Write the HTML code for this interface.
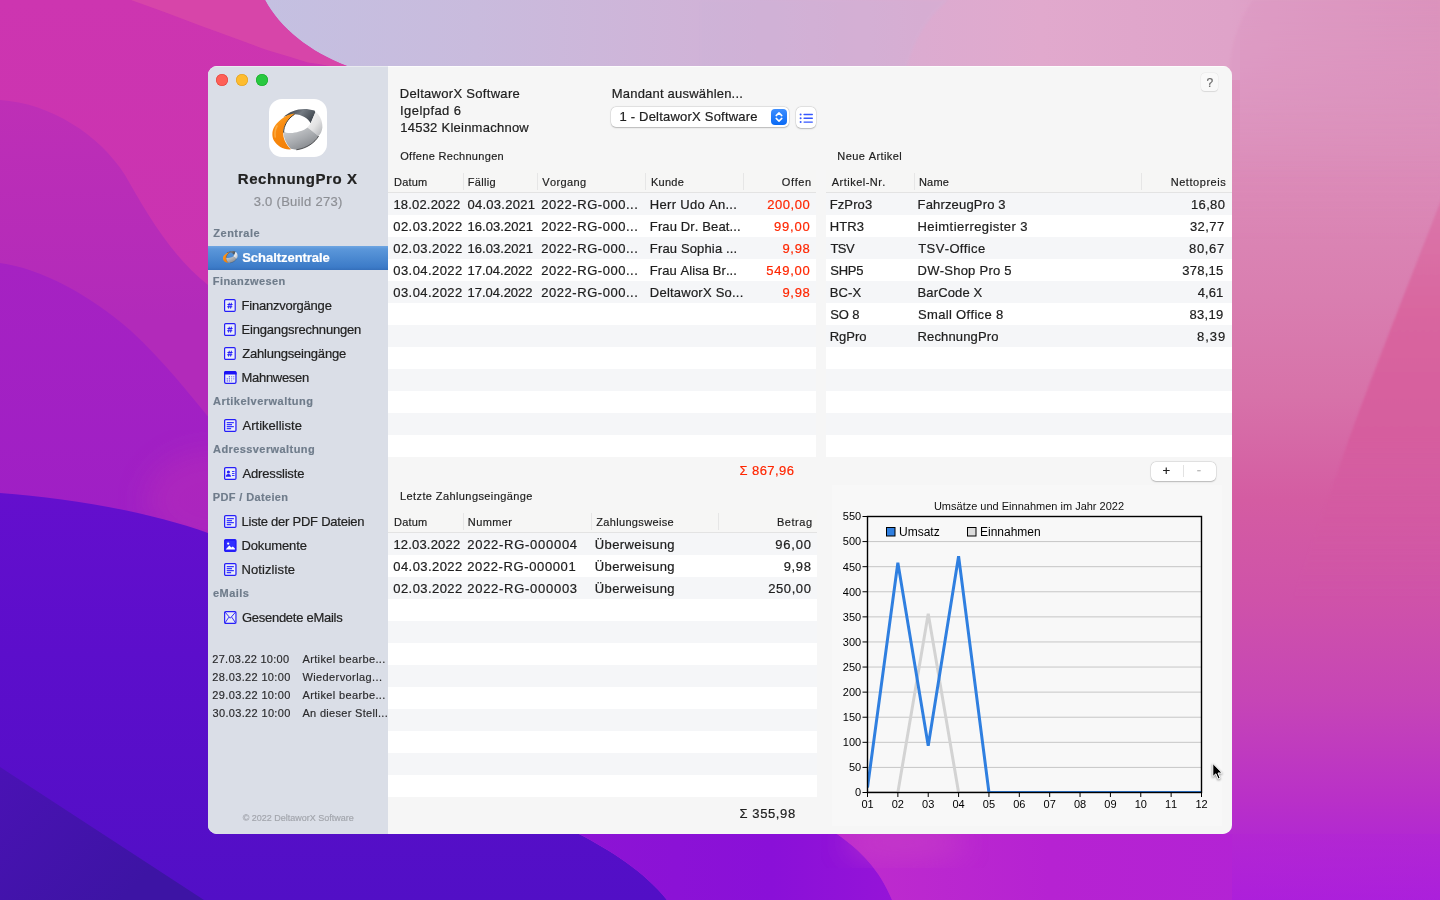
<!DOCTYPE html>
<html lang="de"><head><meta charset="utf-8"><title>RechnungPro X</title>
<style>
html,body{margin:0;padding:0}
body{width:1440px;height:900px;overflow:hidden;position:relative;background:#c03ab8;
 font-family:"Liberation Sans",sans-serif;font-kerning:none;-webkit-font-smoothing:antialiased}
#bg{position:absolute;left:0;top:0}
#win{will-change:transform;position:absolute;left:208px;top:66px;width:1024px;height:768px;border-radius:9px;overflow:hidden;background:#f6f6f6}
#sidebar{position:absolute;left:0;top:0;width:180px;height:768px;background:#dadee7}
#main{position:absolute;left:0;top:0;width:1024px;height:768px;pointer-events:none}
#main:before{content:"";position:absolute;left:0;top:0;right:0;height:1px;background:linear-gradient(90deg,rgba(255,255,255,.4) 0,rgba(255,255,255,.4) 180px,rgba(255,255,255,.8) 180px)}
.t{position:absolute;white-space:nowrap;line-height:20px;color:#202020;-webkit-text-stroke:.2px}
.tl{position:absolute;top:8px;width:12px;height:12px;border-radius:50%}
.ic{position:absolute;overflow:visible}
#sel{position:absolute;left:0;top:180px;width:180px;height:24px;
 background:linear-gradient(#6fa6e2 0,#5b97da 12%,#3c7bc8 88%,#356fbb 100%)}
.btn{position:absolute;background:#fff;border-radius:5px;box-shadow:0 0 0 .5px rgba(0,0,0,.10),0 .5px 1.5px rgba(0,0,0,.22)}
.help{position:absolute;width:17px;height:18px;border-radius:4px;background:#f9f9f9;box-shadow:0 0 0 .5px rgba(0,0,0,.05),0 .5px 1px rgba(0,0,0,.10)}
.tbl{position:absolute;overflow:hidden;
 background:repeating-linear-gradient(#f5f6f8 0,#f5f6f8 22px,#fff 22px,#fff 44px) 0 23px/100% 100% no-repeat #fff}
.th{position:absolute;left:0;top:0;right:0;background:#f6f6f5;border-bottom:1px solid #e3e3e3}
.sep{position:absolute;top:3px;width:1px;height:17px;background:#e6e6e6}
</style></head>
<body>
<svg id="bg" width="1440" height="900" viewBox="0 0 1440 900">
<defs>
 <linearGradient id="gR" x1="0" y1="0" x2="0" y2="900" gradientUnits="userSpaceOnUse">
  <stop offset="0" stop-color="#df9dc6"/><stop offset=".11" stop-color="#dd92bd"/><stop offset=".22" stop-color="#db88b6"/>
  <stop offset=".33" stop-color="#d97eb0"/><stop offset=".44" stop-color="#d772a9"/><stop offset=".555" stop-color="#d45ca2"/>
  <stop offset=".667" stop-color="#cf52a9"/><stop offset=".778" stop-color="#c645b6"/><stop offset=".889" stop-color="#b930c8"/>
  <stop offset=".945" stop-color="#b026d4"/><stop offset="1" stop-color="#a81ce0"/>
 </linearGradient>
 <linearGradient id="gR3" x1="0" y1="0" x2="0" y2="240" gradientUnits="userSpaceOnUse">
  <stop offset="0" stop-color="#da8fbc" stop-opacity=".25"/><stop offset=".4" stop-color="#da8fbc" stop-opacity=".25"/><stop offset="1" stop-color="#da8fbc" stop-opacity="0"/>
 </linearGradient>
 <linearGradient id="gR2" x1="0" y1="190" x2="0" y2="600" gradientUnits="userSpaceOnUse">
  <stop offset="0" stop-color="#da78ab"/><stop offset=".3" stop-color="#d9669f"/><stop offset=".6" stop-color="#d65d9e"/><stop offset="1" stop-color="#d055a6" stop-opacity="0"/>
 </linearGradient>
 <linearGradient id="gT" x1="265" y1="0" x2="1440" y2="0" gradientUnits="userSpaceOnUse">
  <stop offset="0" stop-color="#c4c0e1"/><stop offset=".18" stop-color="#c9bbdd"/><stop offset=".42" stop-color="#d2b1d6"/>
  <stop offset=".56" stop-color="#dcabd0"/><stop offset=".66" stop-color="#e1a9cd"/><stop offset=".82" stop-color="#dfa3c9"/><stop offset=".86" stop-color="#de9ec5" />
  <stop offset="1" stop-color="#dc94bd"/>
 </linearGradient>
 <linearGradient id="gTfade" x1="0" y1="0" x2="0" y2="1">
  <stop offset="0" stop-color="#fff" stop-opacity="1"/><stop offset=".15" stop-color="#fff" stop-opacity=".9"/><stop offset="1" stop-color="#fff" stop-opacity="0"/>
 </linearGradient>
 <mask id="mT"><rect x="1200" y="0" width="240" height="180" fill="url(#gTfade)"/></mask>
 <linearGradient id="gL" x1="0" y1="0" x2="0" y2="560" gradientUnits="userSpaceOnUse">
  <stop offset="0" stop-color="#cd35b0"/><stop offset=".5" stop-color="#ca33b1"/><stop offset="1" stop-color="#c230b4"/>
 </linearGradient>
 <linearGradient id="gB1" x1="0" y1="100" x2="0" y2="320" gradientUnits="userSpaceOnUse">
  <stop offset="0" stop-color="#be2fb6"/><stop offset="1" stop-color="#b22aba"/>
 </linearGradient>
 <linearGradient id="gB2" x1="0" y1="263" x2="0" y2="520" gradientUnits="userSpaceOnUse">
  <stop offset="0" stop-color="#a622c2"/><stop offset="1" stop-color="#9f1fc5"/>
 </linearGradient>
 <linearGradient id="gV" x1="0" y1="490" x2="0" y2="900" gradientUnits="userSpaceOnUse">
  <stop offset="0" stop-color="#640fcd"/><stop offset=".4" stop-color="#5c0ecb"/><stop offset="1" stop-color="#520fc6"/>
 </linearGradient>
 <linearGradient id="gD" x1="0" y1="770" x2="120" y2="900" gradientUnits="userSpaceOnUse">
  <stop offset="0" stop-color="#4a12b4"/><stop offset="1" stop-color="#3d14a4"/>
 </linearGradient>
 <linearGradient id="gP" x1="580" y1="0" x2="900" y2="0" gradientUnits="userSpaceOnUse">
  <stop offset="0" stop-color="#8c14d4"/><stop offset=".6" stop-color="#8a10d8"/><stop offset="1" stop-color="#9614d8"/>
 </linearGradient>
 <linearGradient id="gM" x1="840" y1="0" x2="1440" y2="0" gradientUnits="userSpaceOnUse">
  <stop offset="0" stop-color="#be2ccd"/><stop offset=".35" stop-color="#b622d2"/><stop offset="1" stop-color="#b024d6"/>
 </linearGradient>
 <filter id="b2" x="-5%" y="-5%" width="110%" height="110%"><feGaussianBlur stdDeviation="1.2"/></filter>
 <filter id="b14" x="-20%" y="-20%" width="140%" height="140%"><feGaussianBlur stdDeviation="14"/></filter>
 <filter id="b30" x="-30%" y="-30%" width="160%" height="160%"><feGaussianBlur stdDeviation="30"/></filter>
</defs>
<!-- base pink field (right side, fades to magenta at the bottom) -->
<rect width="1440" height="900" fill="url(#gR)"/>
<!-- upper lavender -> pink sheet -->
<rect x="200" y="0" width="1040" height="80" fill="url(#gT)"/>
<rect x="1240" y="0" width="200" height="200" fill="url(#gT)" mask="url(#mT)"/>
<!-- soft highlights on the pink sheet -->
<path d="M948 0C925 20 912 44 906 70L700 70 700 0Z" fill="#cdb3d8" opacity=".35" filter="url(#b2)"/>
<path d="M1252 0C1238 22 1231 44 1229 70L1229 240 1440 240 1440 0Z" fill="url(#gR3)" filter="url(#b2)"/>
<path d="M1445 190C1410 280 1370 380 1345 450 1325 510 1305 560 1290 610L1445 610Z" fill="url(#gR2)" filter="url(#b2)"/>
<!-- magenta hill on the left -->
<path d="M0 0H265C280 28 310 52 347 66L420 100V600H0Z" fill="url(#gL)"/>
<path d="M131 0H265C280 28 310 52 347 66L330 66C322 64.5 315 63.5 308 62.5 294 58 280 54 267 50 245 42 224 34 204 27 178 17 154 8 131 0Z" fill="#d847a8" opacity=".92"/>
<path d="M0 100C50 103 100 135 125 175 145 210 170 255 208 285L240 305V600H0Z" fill="url(#gB1)"/>
<path d="M0 263C40 268 90 295 130 330 165 362 190 395 215 425L240 450V600H0Z" fill="url(#gB2)"/>
<ellipse cx="215" cy="500" rx="70" ry="50" fill="#bb2fb6" opacity=".45" filter="url(#b14)"/>
<!-- violet foreground -->
<path d="M0 493C70 498 150 512 208 533L560 700 579 834C610 850 645 872 667 900H0Z" fill="url(#gV)"/>
<path d="M0 767 204 900H0Z" fill="url(#gD)"/>
<!-- purple / magenta dunes along the bottom -->
<path d="M579 834C610 850 645 872 667 900H892C880 870 860 850 837 834Z" fill="url(#gP)"/>
<path d="M837 834C860 850 880 870 892 900H1440V834Z" fill="url(#gM)"/>
<ellipse cx="905" cy="842" rx="60" ry="18" fill="#cc44c4" opacity=".5" filter="url(#b14)"/>
<rect x="1232" y="790" width="208" height="110" fill="url(#gR)" opacity=".55"/>
</svg>

<div id="win">
<div id="sidebar">
<i class="tl" style="left:8px;background:#fe5f57;box-shadow:inset 0 0 0 .6px #e0443e"></i><i class="tl" style="left:28px;background:#febc2e;box-shadow:inset 0 0 0 .6px #dea123"></i><i class="tl" style="left:48px;background:#28c840;box-shadow:inset 0 0 0 .6px #1aab29"></i>
<svg class="ic" style="left:61px;top:33px" width="58" height="58" viewBox="0 0 58 58">
<defs>
 <linearGradient id="lgO" x1="0" y1="0" x2=".35" y2="1"><stop offset="0" stop-color="#ffab2e"/><stop offset=".45" stop-color="#f98a10"/><stop offset="1" stop-color="#f48208"/></linearGradient>
 <linearGradient id="lgD" x1="0" y1=".2" x2="1" y2=".6"><stop offset="0" stop-color="#2a2f36"/><stop offset=".5" stop-color="#747b83"/><stop offset="1" stop-color="#3c434b"/></linearGradient>
 <linearGradient id="lgS" x1=".1" y1="0" x2=".9" y2="1"><stop offset="0" stop-color="#f7f7f7"/><stop offset=".55" stop-color="#e2e2e3"/><stop offset="1" stop-color="#b3b5b8"/></linearGradient>
 <linearGradient id="lgB" x1=".1" y1="0" x2=".8" y2="1"><stop offset="0" stop-color="#d2d4d6"/><stop offset=".55" stop-color="#a6a9ad"/><stop offset="1" stop-color="#7e8185"/></linearGradient>
 <g id="logo">
  <path d="M14.6 17.8C22 11 34 7.6 45.5 11.6L46.5 13.4 41.7 24.3C39 19.4 33 15.6 25.3 15.3Z" fill="url(#lgD)"/>
  <path d="M46.3 13.1C50.2 15.5 53.6 21 53.4 28.4 53 32 51.6 35 49.4 37L38.4 28.5 41.7 24.2Z" fill="url(#lgS)"/>
  <path d="M14.3 32.2C17 34.6 24 34.7 30 32.6 34 31.2 37 29.9 38.5 28.4L49.5 37C46 43.4 38 49.2 27.6 50.7L21.6 49.8C16.6 44 14.2 38 14.3 32.2Z" fill="url(#lgB)"/>
  <path d="M27.4 50.8C38 49.4 46 43.4 49.6 37" stroke="#1d1f22" stroke-width=".9" fill="none" opacity=".8"/>
  <path d="M25.2 14.5C20.5 15.2 17 16.8 14.6 18.5 10.8 21.2 8.2 23.7 6.5 26 4.5 28.8 3.6 31.5 3.4 33.8 3.2 37 3.7 39.5 4.9 41.6 6.3 44.2 8.6 46.4 11.3 47.9 14 49.3 17 50.1 20.6 50.4L21.9 50.2C16.4 45 14 39 14.1 33.8 14.2 27 18.5 19.5 25.4 15.2Z" fill="url(#lgO)"/>
  <path d="M25.6 15.3C18.6 19.6 14.6 27 14.6 33.6" stroke="#15120e" stroke-width=".9" fill="none" opacity=".9"/>
  <path d="M8 27C6.4 30 5.6 34 6.2 38" stroke="#ffc76a" stroke-width="1.6" fill="none" opacity=".55" stroke-linecap="round"/>
 </g>
</defs>
<rect width="58" height="58" rx="13" fill="#fff"/>
<use href="#logo"/>
</svg>

<span class="t" style="top:103px;font-size:15px;font-weight:700;color:#222;letter-spacing:0.552px;left:29.80px;">RechnungPro X</span>
<span class="t" style="top:126px;font-size:13px;color:#8d8f95;letter-spacing:0.289px;left:45.70px;">3.0 (Build 273)</span>
<span class="t" style="top:157px;font-size:11px;font-weight:700;-webkit-text-stroke:.17px;color:#6f7c8b;letter-spacing:0.516px;left:5.27px;">Zentrale</span>
<div id="sel"></div>
<svg class="ic" style="left:14px;top:181.5px" width="17" height="17" viewBox="0 0 58 58"><use href="#logo"/></svg>

<span class="t" style="top:182px;font-size:13px;font-weight:700;color:#fff;letter-spacing:-0.040px;left:34.23px;">Schaltzentrale</span>
<span class="t" style="top:205px;font-size:11px;font-weight:700;-webkit-text-stroke:.17px;color:#6f7c8b;letter-spacing:0.396px;left:4.86px;">Finanzwesen</span>
<span class="t" style="top:325px;font-size:11px;font-weight:700;-webkit-text-stroke:.17px;color:#6f7c8b;letter-spacing:0.475px;left:5.03px;">Artikelverwaltung</span>
<span class="t" style="top:373px;font-size:11px;font-weight:700;-webkit-text-stroke:.17px;color:#6f7c8b;letter-spacing:0.416px;left:5.03px;">Adressverwaltung</span>
<span class="t" style="top:421px;font-size:11px;font-weight:700;-webkit-text-stroke:.17px;color:#6f7c8b;letter-spacing:0.351px;left:4.86px;">PDF / Dateien</span>
<span class="t" style="top:517px;font-size:11px;font-weight:700;-webkit-text-stroke:.17px;color:#6f7c8b;letter-spacing:0.470px;left:4.97px;">eMails</span>
<span class="t" style="top:230px;font-size:13px;color:#222;letter-spacing:-0.222px;left:33.53px;">Finanzvorgänge</span>
<svg class="ic" style="left:16px;top:232.8px" width="11.8" height="13" viewBox="0 0 12 13" preserveAspectRatio="none"><rect x=".6" y=".6" width="10.8" height="11.8" rx="1.1" fill="#eceff7" stroke="#261ef8" stroke-width="1.2"/><path d="M5.4 3.7 4.6 9.5M7.5 3.7 6.7 9.5M3.5 5.5h5.2M3.2 7.7h5.2" stroke="#261ef8" stroke-width="1.05" fill="none"/></svg>
<span class="t" style="top:254px;font-size:13px;color:#222;letter-spacing:-0.180px;left:33.53px;">Eingangsrechnungen</span>
<svg class="ic" style="left:16px;top:256.8px" width="11.8" height="13" viewBox="0 0 12 13" preserveAspectRatio="none"><rect x=".6" y=".6" width="10.8" height="11.8" rx="1.1" fill="#eceff7" stroke="#261ef8" stroke-width="1.2"/><path d="M5.4 3.7 4.6 9.5M7.5 3.7 6.7 9.5M3.5 5.5h5.2M3.2 7.7h5.2" stroke="#261ef8" stroke-width="1.05" fill="none"/></svg>
<span class="t" style="top:278px;font-size:13px;color:#222;letter-spacing:-0.199px;left:34.19px;">Zahlungseingänge</span>
<svg class="ic" style="left:16px;top:280.8px" width="11.8" height="13" viewBox="0 0 12 13" preserveAspectRatio="none"><rect x=".6" y=".6" width="10.8" height="11.8" rx="1.1" fill="#eceff7" stroke="#261ef8" stroke-width="1.2"/><path d="M5.4 3.7 4.6 9.5M7.5 3.7 6.7 9.5M3.5 5.5h5.2M3.2 7.7h5.2" stroke="#261ef8" stroke-width="1.05" fill="none"/></svg>
<span class="t" style="top:302px;font-size:13px;color:#222;letter-spacing:-0.298px;left:33.53px;">Mahnwesen</span>
<svg class="ic" style="left:15.6px;top:304.8px" width="12.6" height="13" viewBox="0 0 12 13" preserveAspectRatio="none"><rect x=".6" y=".6" width="10.8" height="11.8" rx="1.3" fill="#eceff7" stroke="#241cf8" stroke-width="1.2"/><path d="M0 1.8Q0 0 1.8 0H10.2Q12 0 12 1.8V3.4H0Z" fill="#1c12f6"/><g fill="#4a44f2"><rect x="4.6" y="5.2" width="1.1" height="1.1"/><rect x="6.7" y="5.2" width="1.1" height="1.1" opacity=".7"/><rect x="8.7" y="5.2" width="1.1" height="1.1" opacity=".7"/><rect x="2.6" y="7.3" width="1.1" height="1.1"/><rect x="4.6" y="7.3" width="1.1" height="1.1"/><rect x="6.7" y="7.3" width="1.1" height="1.1" opacity=".7"/><rect x="8.7" y="7.3" width="1.1" height="1.1" opacity=".7"/><rect x="2.6" y="9.4" width="1.1" height="1.1"/><rect x="4.6" y="9.4" width="1.1" height="1.1"/><rect x="6.7" y="9.4" width="1.1" height="1.1" opacity=".6"/></g></svg>
<span class="t" style="top:350px;font-size:13px;color:#222;letter-spacing:0.006px;left:34.57px;">Artikelliste</span>
<svg class="ic" style="left:15.6px;top:352.8px" width="12.6" height="13" viewBox="0 0 12 13" preserveAspectRatio="none"><rect x=".6" y=".6" width="10.8" height="11.8" rx="1.1" fill="#eceff7" stroke="#261ef8" stroke-width="1.2"/><path d="M2.6 3.6h6.8M2.6 5.6h5M2.6 7.6h6.8M2.6 9.6h4.2" stroke="#3a3aff" stroke-width="1.1"/></svg>
<span class="t" style="top:398px;font-size:13px;color:#222;letter-spacing:-0.178px;left:34.57px;">Adressliste</span>
<svg class="ic" style="left:15.6px;top:400.8px" width="12.6" height="13" viewBox="0 0 12 13" preserveAspectRatio="none"><rect x=".6" y=".6" width="10.8" height="11.8" rx="1.1" fill="#eceff7" stroke="#261ef8" stroke-width="1.2"/><circle cx="4.2" cy="5" r="1.5" fill="#261ef8"/><path d="M1.8 9.8Q1.9 7 4.2 7Q6.5 7 6.6 9.8Z" fill="#261ef8"/><path d="M7.6 4.6h2.4M7.6 6.6h2.4M7.6 8.6h2.4" stroke="#3a3aff" stroke-width="1"/></svg>
<span class="t" style="top:446px;font-size:13px;color:#222;letter-spacing:-0.244px;left:33.53px;">Liste der PDF Dateien</span>
<svg class="ic" style="left:15.6px;top:448.8px" width="12.6" height="13" viewBox="0 0 12 13" preserveAspectRatio="none"><rect x=".6" y=".6" width="10.8" height="11.8" rx="1.1" fill="#eceff7" stroke="#261ef8" stroke-width="1.2"/><path d="M2.6 3.6h6.8M2.6 5.6h5M2.6 7.6h6.8M2.6 9.6h4.2" stroke="#3a3aff" stroke-width="1.1"/></svg>
<span class="t" style="top:470px;font-size:13px;color:#222;letter-spacing:-0.142px;left:33.53px;">Dokumente</span>
<svg class="ic" style="left:15.6px;top:472.8px" width="12.6" height="13" viewBox="0 0 12 13" preserveAspectRatio="none"><rect x=".6" y=".6" width="10.8" height="11.8" rx="1.1" fill="#261ef8" stroke="#261ef8" stroke-width="1.2"/><rect x="1.6" y="2" width="8.8" height="8.6" fill="#3030ff"/><circle cx="4" cy="4.6" r="1.1" fill="#fff"/><path d="M1.6 10.4 5 6.6 7 8.6 8.4 7.4 10.4 9.6V10.6H1.6Z" fill="#fff"/></svg>
<span class="t" style="top:494px;font-size:13px;color:#222;letter-spacing:0.090px;left:33.53px;">Notizliste</span>
<svg class="ic" style="left:15.6px;top:496.8px" width="12.6" height="13" viewBox="0 0 12 13" preserveAspectRatio="none"><rect x=".6" y=".6" width="10.8" height="11.8" rx="1.1" fill="#eceff7" stroke="#261ef8" stroke-width="1.2"/><path d="M2.6 3.6h6.8M2.6 5.6h5M2.6 7.6h6.8M2.6 9.6h4.2" stroke="#3a3aff" stroke-width="1.1"/></svg>
<span class="t" style="top:542px;font-size:13px;color:#222;letter-spacing:-0.270px;left:33.95px;">Gesendete eMails</span>
<svg class="ic" style="left:15.6px;top:544.8px" width="12.6" height="13" viewBox="0 0 12 13" preserveAspectRatio="none"><rect x=".6" y=".6" width="10.8" height="11.8" rx="1.2" fill="#e8ebf6" stroke="#261ef8" stroke-width="1.1"/><path d="M.8.9 6 7.2 11.2.9M.8 12.2 4.6 6.2M11.2 12.2 7.4 6.2" stroke="#261ef8" stroke-width=".9" fill="none"/></svg>
<span class="t" style="top:583px;font-size:11px;-webkit-text-stroke:.17px;color:#2a2a2c;letter-spacing:0.252px;left:4.35px;">27.03.22 10:00</span>
<span class="t" style="top:583px;font-size:11px;-webkit-text-stroke:.17px;color:#2a2a2c;letter-spacing:0.362px;left:94.48px;">Artikel bearbe...</span>
<span class="t" style="top:601px;font-size:11px;-webkit-text-stroke:.17px;color:#2a2a2c;letter-spacing:0.352px;left:4.35px;">28.03.22 10:00</span>
<span class="t" style="top:601px;font-size:11px;-webkit-text-stroke:.17px;color:#2a2a2c;letter-spacing:0.399px;left:94.45px;">Wiedervorlag...</span>
<span class="t" style="top:619px;font-size:11px;-webkit-text-stroke:.17px;color:#2a2a2c;letter-spacing:0.352px;left:4.35px;">29.03.22 10:00</span>
<span class="t" style="top:619px;font-size:11px;-webkit-text-stroke:.17px;color:#2a2a2c;letter-spacing:0.362px;left:94.48px;">Artikel bearbe...</span>
<span class="t" style="top:637px;font-size:11px;-webkit-text-stroke:.17px;color:#2a2a2c;letter-spacing:0.342px;left:4.48px;">30.03.22 10:00</span>
<span class="t" style="top:637px;font-size:11px;-webkit-text-stroke:.17px;color:#2a2a2c;letter-spacing:0.302px;left:94.48px;">An dieser Stell...</span>
<span class="t" style="top:742px;font-size:9px;-webkit-text-stroke:.17px;color:#a3a6ad;letter-spacing:-0.010px;left:34.76px;">© 2022 DeltaworX Software</span>
</div>
<div id="main">
<span class="t" style="top:18px;font-size:13px;letter-spacing:0.304px;left:191.73px;">DeltaworX Software</span>
<span class="t" style="top:35px;font-size:13px;letter-spacing:0.441px;left:192.00px;">Igelpfad 6</span>
<span class="t" style="top:52px;font-size:13px;letter-spacing:0.250px;left:192.21px;">14532 Kleinmachnow</span>
<span class="t" style="top:18px;font-size:13px;letter-spacing:0.208px;left:403.73px;">Mandant auswählen...</span>
<div class="btn" style="left:403px;top:41px;width:178px;height:20px"></div>
<span class="t" style="top:41px;font-size:13px;letter-spacing:0.215px;left:411.41px;">1 - DeltaworX Software</span>
<svg class="ic" style="left:563px;top:43px" width="16" height="16" viewBox="0 0 16 16"><defs><linearGradient id="stp" x1="0" y1="0" x2="0" y2="1"><stop offset="0" stop-color="#3d8eff"/><stop offset="1" stop-color="#0a6af5"/></linearGradient></defs><rect width="16" height="16" rx="4" fill="url(#stp)"/><path d="M5.2 6.6 8 3.9 10.8 6.6M5.2 9.4 8 12.1 10.8 9.4" stroke="#fff" stroke-width="1.5" fill="none" stroke-linecap="round" stroke-linejoin="round"/></svg>
<div class="btn" style="left:588px;top:41px;width:20px;height:21px"></div>
<svg class="ic" style="left:590px;top:45px" width="16" height="14" viewBox="0 0 16 14"><g fill="#3557ff"><circle cx="2.6" cy="3.5" r="1"/><circle cx="2.6" cy="7.3" r="1"/><circle cx="2.6" cy="11.1" r="1"/><rect x="5.4" y="2.8" width="9.6" height="1.4" rx=".7"/><rect x="5.4" y="6.6" width="9.6" height="1.4" rx=".7"/><rect x="5.4" y="10.4" width="9.6" height="1.4" rx=".7"/></g></svg>
<div class="help" style="left:993px;top:7px"></div>
<span class="t" style="top:7px;font-size:12px;color:#6a6a6a;letter-spacing:-0.236px;left:998.41px;">?</span>
<span class="t" style="top:80px;font-size:11px;-webkit-text-stroke:.17px;letter-spacing:0.317px;left:192.18px;">Offene Rechnungen</span>
<span class="t" style="top:80px;font-size:11px;-webkit-text-stroke:.17px;letter-spacing:0.411px;left:629.30px;">Neue Artikel</span>
<span class="t" style="top:420px;font-size:11px;-webkit-text-stroke:.17px;letter-spacing:0.402px;left:192.00px;">Letzte Zahlungseingänge</span>
<div class="tbl" style="left:180px;top:104px;width:428px;height:287px"><div class="th" style="height:22px"></div>
<i class="sep" style="left:74.5px"></i>
<i class="sep" style="left:148.5px"></i>
<i class="sep" style="left:257px"></i>
<i class="sep" style="left:355px"></i>
<i class="sep" style="left:427.5px"></i>
</div>
<div class="tbl" style="left:618px;top:104px;width:406px;height:287px"><div class="th" style="height:22px"></div>
<i class="sep" style="left:87.5px"></i>
<i class="sep" style="left:314.5px"></i>
</div>
<div class="tbl" style="left:180px;top:444px;width:429px;height:287px"><div class="th" style="height:22px"></div>
<i class="sep" style="left:74.5px"></i>
<i class="sep" style="left:202.5px"></i>
<i class="sep" style="left:330px"></i>
<i class="sep" style="left:428.5px"></i>
</div>
<span class="t" style="top:106px;font-size:11px;-webkit-text-stroke:.17px;letter-spacing:0.207px;left:186.00px;">Datum</span>
<span class="t" style="top:106px;font-size:11px;-webkit-text-stroke:.17px;letter-spacing:0.325px;left:259.80px;">Fällig</span>
<span class="t" style="top:106px;font-size:11px;-webkit-text-stroke:.17px;letter-spacing:0.395px;left:334.25px;">Vorgang</span>
<span class="t" style="top:106px;font-size:11px;-webkit-text-stroke:.17px;letter-spacing:0.271px;left:442.90px;">Kunde</span>
<span class="t" style="top:106px;font-size:11px;-webkit-text-stroke:.17px;letter-spacing:0.633px;left:573.78px;">Offen</span>
<span class="t" style="top:106px;font-size:11px;-webkit-text-stroke:.17px;letter-spacing:0.474px;left:623.78px;">Artikel-Nr.</span>
<span class="t" style="top:106px;font-size:11px;-webkit-text-stroke:.17px;letter-spacing:0.216px;left:710.90px;">Name</span>
<span class="t" style="top:106px;font-size:11px;-webkit-text-stroke:.17px;letter-spacing:0.552px;left:962.70px;">Nettopreis</span>
<span class="t" style="top:446px;font-size:11px;-webkit-text-stroke:.17px;letter-spacing:0.207px;left:186.00px;">Datum</span>
<span class="t" style="top:446px;font-size:11px;-webkit-text-stroke:.17px;letter-spacing:0.403px;left:259.80px;">Nummer</span>
<span class="t" style="top:446px;font-size:11px;-webkit-text-stroke:.17px;letter-spacing:0.347px;left:388.15px;">Zahlungsweise</span>
<span class="t" style="top:446px;font-size:11px;-webkit-text-stroke:.17px;letter-spacing:0.560px;left:568.90px;">Betrag</span>
<span class="t" style="top:129px;font-size:13px;letter-spacing:0.187px;left:185.41px;">18.02.2022</span>
<span class="t" style="top:129px;font-size:13px;letter-spacing:0.287px;left:259.39px;">04.03.2021</span>
<span class="t" style="top:129px;font-size:13px;letter-spacing:0.541px;left:333.25px;">2022-RG-000...</span>
<span class="t" style="top:129px;font-size:13px;letter-spacing:0.305px;left:441.83px;">Herr Udo An...</span>
<span class="t" style="top:129px;font-size:13px;color:#ff2600;letter-spacing:0.580px;left:559.15px;">200,00</span>
<span class="t" style="top:151px;font-size:13px;letter-spacing:0.433px;left:185.29px;">02.03.2022</span>
<span class="t" style="top:151px;font-size:13px;letter-spacing:0.051px;left:259.51px;">16.03.2021</span>
<span class="t" style="top:151px;font-size:13px;letter-spacing:0.541px;left:333.25px;">2022-RG-000...</span>
<span class="t" style="top:151px;font-size:13px;letter-spacing:0.133px;left:441.83px;">Frau Dr. Beat...</span>
<span class="t" style="top:151px;font-size:13px;color:#ff2600;letter-spacing:0.821px;left:565.99px;">99,00</span>
<span class="t" style="top:173px;font-size:13px;letter-spacing:0.433px;left:185.29px;">02.03.2022</span>
<span class="t" style="top:173px;font-size:13px;letter-spacing:0.051px;left:259.51px;">16.03.2021</span>
<span class="t" style="top:173px;font-size:13px;letter-spacing:0.541px;left:333.25px;">2022-RG-000...</span>
<span class="t" style="top:173px;font-size:13px;letter-spacing:0.149px;left:441.83px;">Frau Sophia ...</span>
<span class="t" style="top:173px;font-size:13px;color:#ff2600;letter-spacing:0.724px;left:574.39px;">9,98</span>
<span class="t" style="top:195px;font-size:13px;letter-spacing:0.433px;left:185.29px;">03.04.2022</span>
<span class="t" style="top:195px;font-size:13px;left:259.51px;">17.04.2022</span>
<span class="t" style="top:195px;font-size:13px;letter-spacing:0.541px;left:333.25px;">2022-RG-000...</span>
<span class="t" style="top:195px;font-size:13px;letter-spacing:0.072px;left:441.83px;">Frau Alisa Br...</span>
<span class="t" style="top:195px;font-size:13px;color:#ff2600;letter-spacing:0.753px;left:558.28px;">549,00</span>
<span class="t" style="top:217px;font-size:13px;letter-spacing:0.433px;left:185.29px;">03.04.2022</span>
<span class="t" style="top:217px;font-size:13px;left:259.51px;">17.04.2022</span>
<span class="t" style="top:217px;font-size:13px;letter-spacing:0.541px;left:333.25px;">2022-RG-000...</span>
<span class="t" style="top:217px;font-size:13px;letter-spacing:0.224px;left:441.83px;">DeltaworX So...</span>
<span class="t" style="top:217px;font-size:13px;color:#ff2600;letter-spacing:0.724px;left:574.39px;">9,98</span>
<span class="t" style="top:129px;font-size:13px;letter-spacing:0.107px;left:621.73px;">FzPro3</span>
<span class="t" style="top:129px;font-size:13px;letter-spacing:0.170px;left:709.53px;">FahrzeugPro 3</span>
<span class="t" style="top:129px;font-size:13px;letter-spacing:0.342px;left:983.01px;">16,80</span>
<span class="t" style="top:151px;font-size:13px;letter-spacing:0.097px;left:621.73px;">HTR3</span>
<span class="t" style="top:151px;font-size:13px;letter-spacing:0.438px;left:709.53px;">Heimtierregister 3</span>
<span class="t" style="top:151px;font-size:13px;letter-spacing:0.454px;left:981.90px;">32,77</span>
<span class="t" style="top:173px;font-size:13px;letter-spacing:-0.600px;left:622.51px;">TSV</span>
<span class="t" style="top:173px;font-size:13px;letter-spacing:0.367px;left:710.31px;">TSV-Office</span>
<span class="t" style="top:173px;font-size:13px;letter-spacing:0.672px;left:981.04px;">80,67</span>
<span class="t" style="top:195px;font-size:13px;letter-spacing:-0.208px;left:622.21px;">SHP5</span>
<span class="t" style="top:195px;font-size:13px;letter-spacing:0.248px;left:709.53px;">DW-Shop Pro 5</span>
<span class="t" style="top:195px;font-size:13px;letter-spacing:0.216px;left:974.30px;">378,15</span>
<span class="t" style="top:217px;font-size:13px;letter-spacing:0.160px;left:621.73px;">BC-X</span>
<span class="t" style="top:217px;font-size:13px;letter-spacing:0.144px;left:709.53px;">BarCode X</span>
<span class="t" style="top:217px;font-size:13px;letter-spacing:0.077px;left:989.70px;">4,61</span>
<span class="t" style="top:239px;font-size:13px;letter-spacing:-0.090px;left:622.21px;">SO 8</span>
<span class="t" style="top:239px;font-size:13px;letter-spacing:0.326px;left:710.01px;">Small Office 8</span>
<span class="t" style="top:239px;font-size:13px;letter-spacing:0.312px;left:981.44px;">83,19</span>
<span class="t" style="top:261px;font-size:13px;letter-spacing:-0.009px;left:621.73px;">RgPro</span>
<span class="t" style="top:261px;font-size:13px;letter-spacing:0.151px;left:709.53px;">RechnungPro</span>
<span class="t" style="top:261px;font-size:13px;letter-spacing:0.960px;left:989.04px;">8,39</span>
<span class="t" style="top:469px;font-size:13px;letter-spacing:0.187px;left:185.41px;">12.03.2022</span>
<span class="t" style="top:469px;font-size:13px;letter-spacing:0.721px;left:259.25px;">2022-RG-000004</span>
<span class="t" style="top:469px;font-size:13px;letter-spacing:0.387px;left:386.80px;">Überweisung</span>
<span class="t" style="top:469px;font-size:13px;letter-spacing:0.796px;left:567.19px;">96,00</span>
<span class="t" style="top:491px;font-size:13px;letter-spacing:0.433px;left:185.29px;">04.03.2022</span>
<span class="t" style="top:491px;font-size:13px;letter-spacing:0.610px;left:259.25px;">2022-RG-000001</span>
<span class="t" style="top:491px;font-size:13px;letter-spacing:0.387px;left:386.80px;">Überweisung</span>
<span class="t" style="top:491px;font-size:13px;letter-spacing:0.658px;left:575.69px;">9,98</span>
<span class="t" style="top:513px;font-size:13px;letter-spacing:0.433px;left:185.29px;">02.03.2022</span>
<span class="t" style="top:513px;font-size:13px;letter-spacing:0.721px;left:259.25px;">2022-RG-000003</span>
<span class="t" style="top:513px;font-size:13px;letter-spacing:0.387px;left:386.80px;">Überweisung</span>
<span class="t" style="top:513px;font-size:13px;letter-spacing:0.580px;left:560.25px;">250,00</span>
<span class="t" style="top:395px;font-size:13px;color:#ff2600;letter-spacing:0.421px;left:531.51px;">Σ 867,96</span>
<span class="t" style="top:738px;font-size:13px;letter-spacing:0.606px;left:531.51px;">Σ 355,98</span>
<div class="btn" style="left:943px;top:395.5px;width:65px;height:19px"></div>
<i style="position:absolute;left:975px;top:399px;width:1px;height:12px;background:#e2e2e2"></i>
<span class="t" style="top:395px;font-size:13px;color:#222;letter-spacing:1.200px;left:954.57px;">+</span>
<span class="t" style="top:394px;font-size:13px;color:#b8b8b8;letter-spacing:1.026px;left:988.82px;">-</span>
<svg class="ic" style="left:0;top:0" width="1024" height="768" viewBox="208 66 1024 768" font-family="'Liberation Sans',sans-serif">
<rect x="832" y="485" width="390" height="341" fill="#f8f8f8"/>
<rect x="867.5" y="516.5" width="334.0" height="276.0" fill="#f8f8f8"/>
<path d="M867.5 767.41H1201.5" stroke="#c6c6c6" stroke-width="1"/>
<path d="M867.5 742.32H1201.5" stroke="#c6c6c6" stroke-width="1"/>
<path d="M867.5 717.23H1201.5" stroke="#c6c6c6" stroke-width="1"/>
<path d="M867.5 692.14H1201.5" stroke="#c6c6c6" stroke-width="1"/>
<path d="M867.5 667.05H1201.5" stroke="#c6c6c6" stroke-width="1"/>
<path d="M867.5 641.95H1201.5" stroke="#c6c6c6" stroke-width="1"/>
<path d="M867.5 616.86H1201.5" stroke="#c6c6c6" stroke-width="1"/>
<path d="M867.5 591.77H1201.5" stroke="#c6c6c6" stroke-width="1"/>
<path d="M867.5 566.68H1201.5" stroke="#c6c6c6" stroke-width="1"/>
<path d="M867.5 541.59H1201.5" stroke="#c6c6c6" stroke-width="1"/>
<clipPath id="plot"><rect x="867.5" y="516.5" width="334.0" height="276.0"/></clipPath>
<g clip-path="url(#plot)" fill="none" stroke-linejoin="miter" stroke-miterlimit="2">
<polyline points="867.50,792.50 897.86,792.50 928.23,613.86 958.59,792.50 988.95,792.50 1201.50,792.50" stroke="#d3d3d3" stroke-width="3"/>
<polyline points="867.50,787.49 897.86,562.67 928.23,745.83 958.59,556.14 988.95,792.50 1201.50,792.50" stroke="#2f7fe0" stroke-width="3"/>
</g>
<rect x="867.5" y="516.5" width="334.0" height="276.0" fill="none" stroke="#000" stroke-width="1.4"/>
<path d="M862.5 792.50H867.5" stroke="#000" stroke-width="1"/>
<text x="861.2" y="796.40" font-size="11" text-anchor="end" fill="#000">0</text>
<path d="M862.5 767.41H867.5" stroke="#000" stroke-width="1"/>
<text x="861.2" y="771.31" font-size="11" text-anchor="end" fill="#000">50</text>
<path d="M862.5 742.32H867.5" stroke="#000" stroke-width="1"/>
<text x="861.2" y="746.22" font-size="11" text-anchor="end" fill="#000">100</text>
<path d="M862.5 717.23H867.5" stroke="#000" stroke-width="1"/>
<text x="861.2" y="721.13" font-size="11" text-anchor="end" fill="#000">150</text>
<path d="M862.5 692.14H867.5" stroke="#000" stroke-width="1"/>
<text x="861.2" y="696.04" font-size="11" text-anchor="end" fill="#000">200</text>
<path d="M862.5 667.05H867.5" stroke="#000" stroke-width="1"/>
<text x="861.2" y="670.95" font-size="11" text-anchor="end" fill="#000">250</text>
<path d="M862.5 641.95H867.5" stroke="#000" stroke-width="1"/>
<text x="861.2" y="645.85" font-size="11" text-anchor="end" fill="#000">300</text>
<path d="M862.5 616.86H867.5" stroke="#000" stroke-width="1"/>
<text x="861.2" y="620.76" font-size="11" text-anchor="end" fill="#000">350</text>
<path d="M862.5 591.77H867.5" stroke="#000" stroke-width="1"/>
<text x="861.2" y="595.67" font-size="11" text-anchor="end" fill="#000">400</text>
<path d="M862.5 566.68H867.5" stroke="#000" stroke-width="1"/>
<text x="861.2" y="570.58" font-size="11" text-anchor="end" fill="#000">450</text>
<path d="M862.5 541.59H867.5" stroke="#000" stroke-width="1"/>
<text x="861.2" y="545.49" font-size="11" text-anchor="end" fill="#000">500</text>
<path d="M862.5 516.50H867.5" stroke="#000" stroke-width="1"/>
<text x="861.2" y="520.40" font-size="11" text-anchor="end" fill="#000">550</text>
<path d="M867.50 792.5V797.0" stroke="#000" stroke-width="1"/>
<text x="867.50" y="808" font-size="11" text-anchor="middle" fill="#000">01</text>
<path d="M897.86 792.5V797.0" stroke="#000" stroke-width="1"/>
<text x="897.86" y="808" font-size="11" text-anchor="middle" fill="#000">02</text>
<path d="M928.23 792.5V797.0" stroke="#000" stroke-width="1"/>
<text x="928.23" y="808" font-size="11" text-anchor="middle" fill="#000">03</text>
<path d="M958.59 792.5V797.0" stroke="#000" stroke-width="1"/>
<text x="958.59" y="808" font-size="11" text-anchor="middle" fill="#000">04</text>
<path d="M988.95 792.5V797.0" stroke="#000" stroke-width="1"/>
<text x="988.95" y="808" font-size="11" text-anchor="middle" fill="#000">05</text>
<path d="M1019.32 792.5V797.0" stroke="#000" stroke-width="1"/>
<text x="1019.32" y="808" font-size="11" text-anchor="middle" fill="#000">06</text>
<path d="M1049.68 792.5V797.0" stroke="#000" stroke-width="1"/>
<text x="1049.68" y="808" font-size="11" text-anchor="middle" fill="#000">07</text>
<path d="M1080.05 792.5V797.0" stroke="#000" stroke-width="1"/>
<text x="1080.05" y="808" font-size="11" text-anchor="middle" fill="#000">08</text>
<path d="M1110.41 792.5V797.0" stroke="#000" stroke-width="1"/>
<text x="1110.41" y="808" font-size="11" text-anchor="middle" fill="#000">09</text>
<path d="M1140.77 792.5V797.0" stroke="#000" stroke-width="1"/>
<text x="1140.77" y="808" font-size="11" text-anchor="middle" fill="#000">10</text>
<path d="M1171.14 792.5V797.0" stroke="#000" stroke-width="1"/>
<text x="1171.14" y="808" font-size="11" text-anchor="middle" fill="#000">11</text>
<path d="M1201.50 792.5V797.0" stroke="#000" stroke-width="1"/>
<text x="1201.50" y="808" font-size="11" text-anchor="middle" fill="#000">12</text>
<text x="1029" y="509.6" font-size="11" text-anchor="middle" fill="#111">Umsätze und Einnahmen im Jahr 2022</text>
<rect x="886.5" y="527.5" width="8.5" height="8.5" fill="#2f7fe0" stroke="#000" stroke-width="1"/>
<text x="899" y="535.8" font-size="12" fill="#000">Umsatz</text>
<rect x="967.5" y="527.5" width="8.5" height="8.5" fill="#dcdcdc" stroke="#000" stroke-width="1"/>
<text x="980" y="535.8" font-size="12" fill="#000">Einnahmen</text>
</svg>
</div>
</div>
<svg style="position:absolute;left:1209px;top:761px;overflow:visible" width="16" height="22" viewBox="0 0 16 22">
<path d="M3.8 2.4V15.6L6.9 12.8 9.1 18 11.2 17.1 9 12H13.2Z" fill="#000" stroke="#fff" stroke-width="1" stroke-linejoin="round" style="filter:drop-shadow(0 1px 1.2px rgba(0,0,0,.45))"/>
</svg>

</body></html>
